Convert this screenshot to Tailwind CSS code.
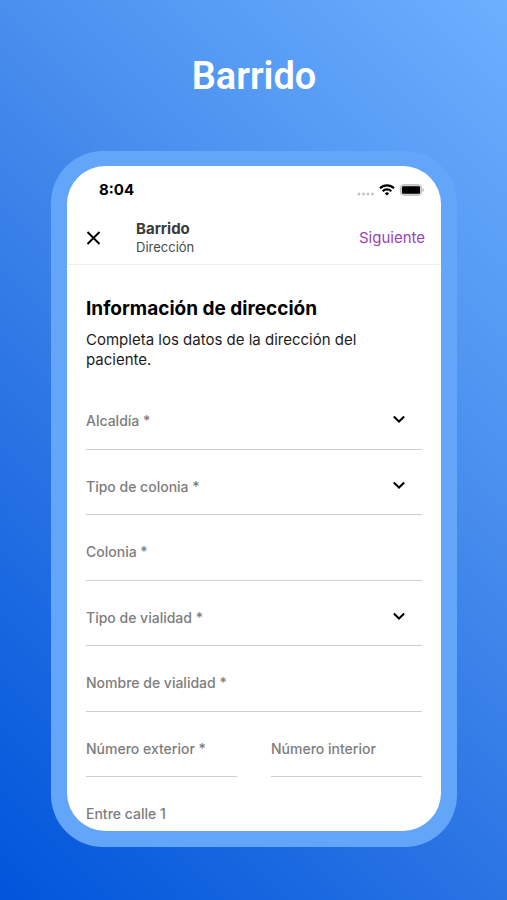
<!DOCTYPE html>
<html lang="es">
<head>
<meta charset="utf-8">
<meta name="viewport" content="width=device-width, initial-scale=1">
<title>Barrido</title>
<script src="https://cdn.jsdelivr.net/npm/@tailwindcss/browser@4"></script>
</head>
<body class="flex h-screen flex-col bg-[linear-gradient(45deg,#0055db_0%,#2a74e4_36%,#4a8fee_64%,#6cb0ff_100%)] pr-[50px] pb-[53px] pl-[51px] font-['Inter',sans-serif] text-black">
  <h1 class="pt-12 pb-[47px] text-center font-['Roboto',sans-serif] text-[38px] leading-14 font-semibold text-white">Barrido</h1>

  <div class="flex min-h-0 flex-1 rounded-[52px] bg-[#63a6f9] p-4 pt-[15px]">
    <main class="min-w-0 flex-1 overflow-hidden rounded-[38px] bg-white">
      <div class="flex h-12 items-center justify-between pr-[17px] pl-8">
        <span class="text-[15px] leading-5 font-bold">8:04</span>
        <div class="flex items-center gap-1">
          <svg class="h-3 w-[18px]" viewBox="0 0 18 12" fill="#c4c4c4" aria-hidden="true">
            <circle cx="2" cy="10" r="1.5"/><circle cx="6.500" cy="10" r="1.5"/><circle cx="11" cy="10" r="1.5"/><circle cx="15.500" cy="10" r="1.5"/>
          </svg>
          <svg class="h-3 w-4" viewBox="0 0 16 12" fill="none" stroke="#000" stroke-width="2.200" aria-hidden="true">
            <path d="M1 4.300a10 10 0 0 1 14 0"/>
            <path d="M3.700 7.200a6.200 6.200 0 0 1 8.600 0"/>
            <path d="M8 11.600 5.800 9.400a3.100 3.100 0 0 1 4.400 0z" fill="#000" stroke="none"/>
          </svg>
          <svg class="ml-px h-3 w-6" viewBox="0 0 24 12" aria-hidden="true">
            <rect x="0.500" y="0.700" width="21" height="10.600" rx="3" fill="#d0d0d0" stroke="#bcbcbc"/>
            <rect x="2" y="2.200" width="18" height="7.600" rx="1.300"/>
            <path d="M22.600 4v4c1.500-.6 1.500-3.400 0-4z" fill="#a8a8a8"/>
          </svg>
        </div>
      </div>

      <header class="flex h-[51px] items-center border-b border-[#ededed] pr-4 pb-[2px] pl-[19px]">
        <button type="button" aria-label="Cerrar" class="mr-[34px] size-4">
          <svg class="size-4" viewBox="0 0 16 16" fill="none" stroke="#000" stroke-width="1.900" aria-hidden="true"><path d="M1.500 2 13.500 14M13.500 2 1.500 14"/></svg>
        </button>
        <div class="flex-1 text-[#3a3a3a]">
          <h2 class="text-[15px] leading-[18px] font-bold">Barrido</h2>
          <p class="text-[13px] leading-[18px] text-[#4a4a4a]">Dirección</p>
        </div>
        <button type="button" class="text-[15px] leading-5 text-[#9b3fb5]">Siguiente</button>
      </header>

      <section class="px-[19px] pt-8">
        <h2 class="text-[19px] leading-6 font-bold">Información de dirección</h2>
        <p class="mt-[9px] text-[15px] leading-5 text-[#1c1c1c]">Completa los datos de la dirección del paciente.</p>
      </section>

      <form class="mt-[14px] grid h-[459px] auto-rows-fr grid-cols-2 gap-x-[34px] px-[19px] text-[14px] leading-5 font-medium text-[#7d7d7d]">
        <div class="col-span-2 grid grid-cols-[1fr_auto] border-b border-[#cfcfcf]">
          <label for="alcaldia" class="pointer-events-none col-start-1 row-start-1 pt-[27px]">Alcaldía *</label>
          <select id="alcaldia" class="col-span-2 col-start-1 row-start-1 w-full appearance-none bg-transparent pt-3 outline-none"><option></option></select>
          <svg class="pointer-events-none col-start-2 row-start-1 mt-[29px] mr-4 h-3 w-[14px]" viewBox="0 0 14 12" fill="none" stroke="#000" stroke-width="2" aria-hidden="true"><path d="M1.800 3.500 7 8.500l5.200-5"/></svg>
        </div>
        <div class="col-span-2 grid grid-cols-[1fr_auto] border-b border-[#cfcfcf]">
          <label for="tipo-colonia" class="pointer-events-none col-start-1 row-start-1 pt-[27px]">Tipo de colonia *</label>
          <select id="tipo-colonia" class="col-span-2 col-start-1 row-start-1 w-full appearance-none bg-transparent pt-3 outline-none"><option></option></select>
          <svg class="pointer-events-none col-start-2 row-start-1 mt-[29px] mr-4 h-3 w-[14px]" viewBox="0 0 14 12" fill="none" stroke="#000" stroke-width="2" aria-hidden="true"><path d="M1.800 3.500 7 8.500l5.200-5"/></svg>
        </div>
        <div class="col-span-2 grid border-b border-[#cfcfcf]">
          <label for="colonia" class="pointer-events-none col-start-1 row-start-1 pt-[27px]">Colonia *</label>
          <input id="colonia" type="text" class="col-start-1 row-start-1 w-full bg-transparent pt-3 outline-none">
        </div>
        <div class="col-span-2 grid grid-cols-[1fr_auto] border-b border-[#cfcfcf]">
          <label for="tipo-vialidad" class="pointer-events-none col-start-1 row-start-1 pt-[27px]">Tipo de vialidad *</label>
          <select id="tipo-vialidad" class="col-span-2 col-start-1 row-start-1 w-full appearance-none bg-transparent pt-3 outline-none"><option></option></select>
          <svg class="pointer-events-none col-start-2 row-start-1 mt-[29px] mr-4 h-3 w-[14px]" viewBox="0 0 14 12" fill="none" stroke="#000" stroke-width="2" aria-hidden="true"><path d="M1.800 3.500 7 8.500l5.200-5"/></svg>
        </div>
        <div class="col-span-2 grid border-b border-[#cfcfcf]">
          <label for="nombre-vialidad" class="pointer-events-none col-start-1 row-start-1 pt-[27px]">Nombre de vialidad *</label>
          <input id="nombre-vialidad" type="text" class="col-start-1 row-start-1 w-full bg-transparent pt-3 outline-none">
        </div>
        <div class="grid border-b border-[#cfcfcf]">
          <label for="numero-exterior" class="pointer-events-none col-start-1 row-start-1 pt-[27px]">Número exterior *</label>
          <input id="numero-exterior" type="text" class="col-start-1 row-start-1 w-full bg-transparent pt-3 outline-none">
        </div>
        <div class="grid border-b border-[#cfcfcf]">
          <label for="numero-interior" class="pointer-events-none col-start-1 row-start-1 pt-[27px]">Número interior</label>
          <input id="numero-interior" type="text" class="col-start-1 row-start-1 w-full bg-transparent pt-3 outline-none">
        </div>
        <div class="col-span-2 grid border-b border-[#cfcfcf]">
          <label for="entre-calle" class="pointer-events-none col-start-1 row-start-1 pt-[27px]">Entre calle 1</label>
          <input id="entre-calle" type="text" class="col-start-1 row-start-1 w-full bg-transparent pt-3 outline-none">
        </div>
      </form>
    </main>
  </div>
</body>
</html>
